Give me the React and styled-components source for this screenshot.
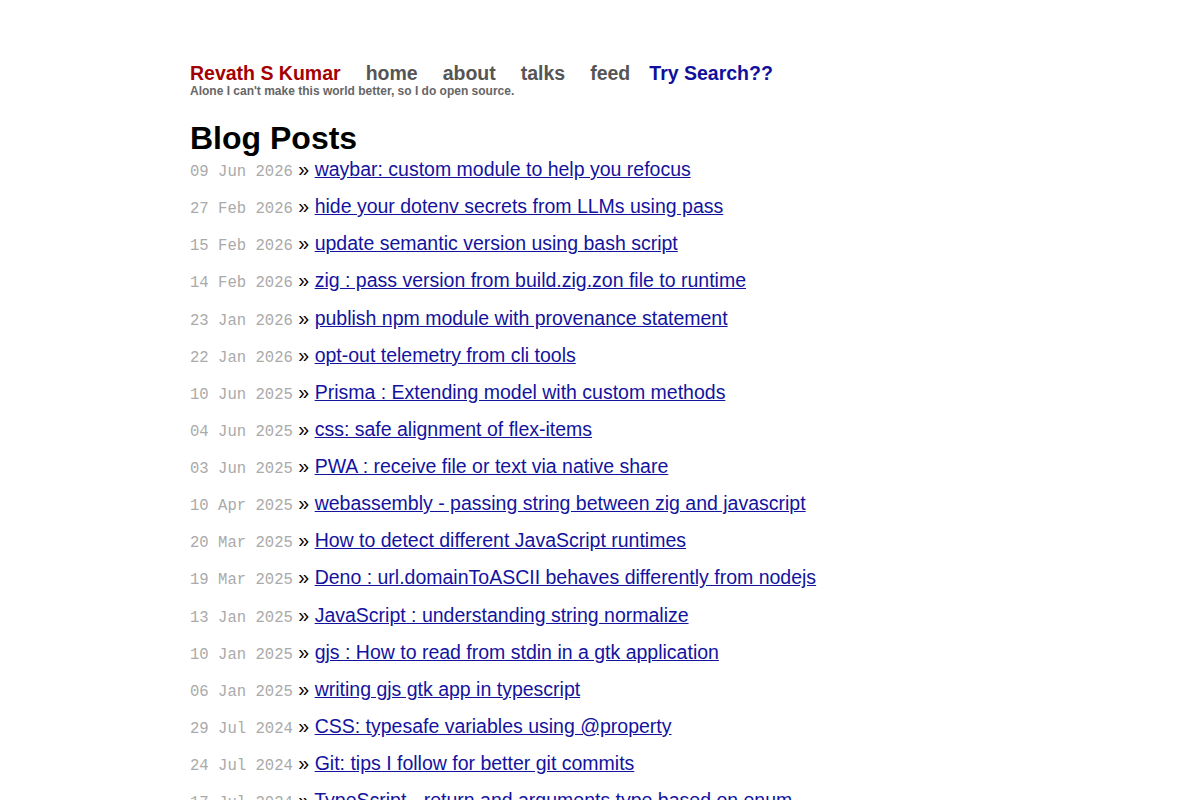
import React from 'react';
import styled, { createGlobalStyle } from 'styled-components';

const GlobalStyle = createGlobalStyle`
  body {
    margin: 0;
    background: #fff;
    font-family: 'Liberation Sans', Arial, sans-serif;
    color: #000;
  }
`;

const Page = styled.div`
  width: 820px;
  margin: 0 auto;
  padding-top: 62px;
`;

const Masthead = styled.header`
  display: flex;
  flex-direction: column;
`;

const Nav = styled.nav`
  display: flex;
  align-items: baseline;
  font-size: 19.5px;
  font-weight: 700;
  line-height: 23px;
`;

const Brand = styled.a`
  color: #a50000;
  text-decoration: none;
`;

const NavLink = styled.a`
  margin-left: ${({ $gap }) => $gap || 25}px;
  color: ${({ $accent }) => ($accent ? '#10109c' : '#555')};
  text-decoration: none;
`;

const Tagline = styled.p`
  margin: -1px 0 0;
  font-size: 12px;
  font-weight: 700;
  line-height: 14px;
  color: #666;
`;

const Title = styled.h1`
  margin: 22px 0 0;
  font-size: 32px;
  line-height: 37px;
  font-weight: 700;
`;

const PostList = styled.ul`
  list-style: none;
  margin: 1px 0 0;
  padding: 0;
`;

const Post = styled.li`
  height: 23px;
  margin-bottom: 14.125px;
  font-size: 19.5px;
  line-height: 23px;
  white-space: nowrap;
`;

const PostDate = styled.span`
  font-family: 'Liberation Mono', 'Courier New', monospace;
  font-size: 15.6px;
  color: #aaa;
`;

const PostLink = styled.a`
  color: #13139e;
  text-decoration: underline;
`;

const posts = [
  ['09 Jun 2026', 'waybar: custom module to help you refocus'],
  ['27 Feb 2026', 'hide your dotenv secrets from LLMs using pass'],
  ['15 Feb 2026', 'update semantic version using bash script'],
  ['14 Feb 2026', 'zig : pass version from build.zig.zon file to runtime'],
  ['23 Jan 2026', 'publish npm module with provenance statement'],
  ['22 Jan 2026', 'opt-out telemetry from cli tools'],
  ['10 Jun 2025', 'Prisma : Extending model with custom methods'],
  ['04 Jun 2025', 'css: safe alignment of flex-items'],
  ['03 Jun 2025', 'PWA : receive file or text via native share'],
  ['10 Apr 2025', 'webassembly - passing string between zig and javascript'],
  ['20 Mar 2025', 'How to detect different JavaScript runtimes'],
  ['19 Mar 2025', 'Deno : url.domainToASCII behaves differently from nodejs'],
  ['13 Jan 2025', 'JavaScript : understanding string normalize'],
  ['10 Jan 2025', 'gjs : How to read from stdin in a gtk application'],
  ['06 Jan 2025', 'writing gjs gtk app in typescript'],
  ['29 Jul 2024', 'CSS: typesafe variables using @property'],
  ['24 Jul 2024', 'Git: tips I follow for better git commits'],
  ['17 Jul 2024', 'TypeScript - return and arguments type based on enum'],
];

const App = () => (
  <>
    <GlobalStyle />
    <Page>
      <Masthead>
        <Nav>
          <Brand href="#">Revath S Kumar</Brand>
          <NavLink href="#">home</NavLink>
          <NavLink href="#">about</NavLink>
          <NavLink href="#">talks</NavLink>
          <NavLink href="#">feed</NavLink>
          <NavLink href="#" $accent $gap={19}>
            Try Search??
          </NavLink>
        </Nav>
        <Tagline>Alone I can't make this world better, so I do open source.</Tagline>
      </Masthead>
      <Title>Blog Posts</Title>
      <PostList>
        {posts.map(([date, title]) => (
          <Post key={title}>
            <PostDate>{date}</PostDate> » <PostLink href="#">{title}</PostLink>
          </Post>
        ))}
      </PostList>
    </Page>
  </>
);

export default App;
